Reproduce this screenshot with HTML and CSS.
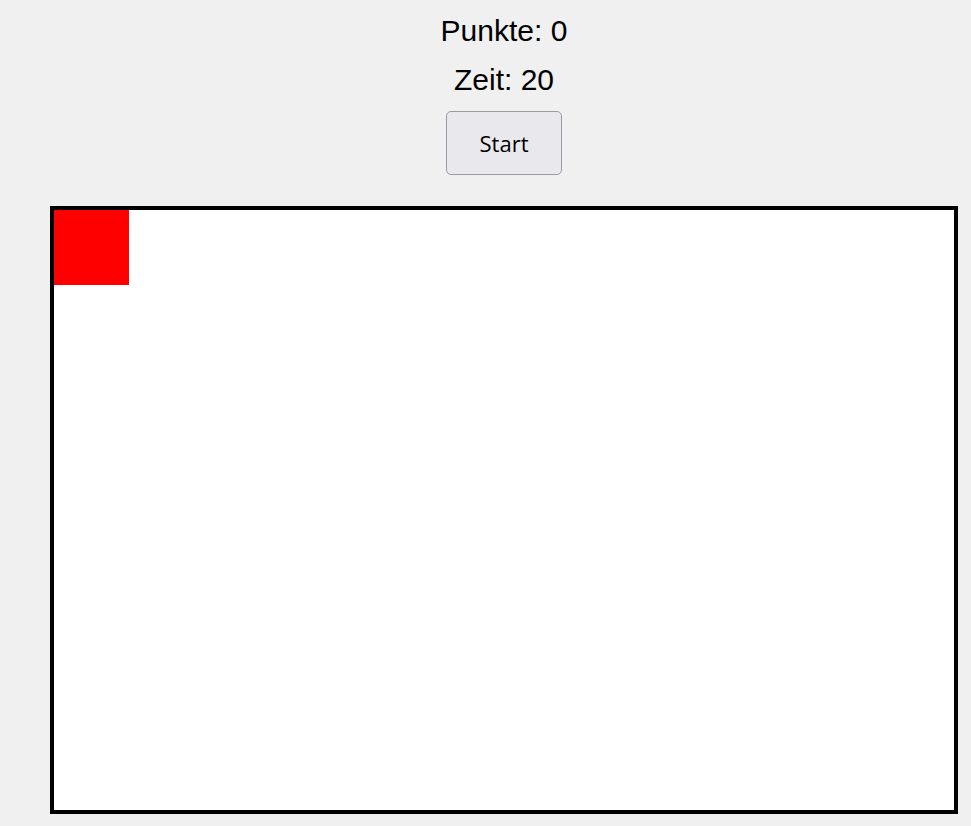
FILE: index.html
```html
<!DOCTYPE html>
<html lang="de">
<head>
<meta charset="utf-8">
<title>Spiel</title>
<link rel="stylesheet" href="styles.css">
</head>
<body>
<div class="header">
  <div class="stat">Punkte: 0</div>
  <div class="stat">Zeit: 20</div>
  <button class="start">Start</button>
</div>
<div class="board">
  <div class="target"></div>
</div>
</body>
</html>
```
FILE: styles.css
```css
html, body {
  margin: 0;
  padding: 0;
  background: #f0f0f0;
  overflow: hidden;
}
body {
  font-family: "Liberation Sans", Arial, sans-serif;
  color: #000;
}
.header {
  padding: 6px 0 0 37px;
  display: flex;
  flex-direction: column;
  align-items: center;
}
.stat {
  font-size: 30px;
  line-height: 49px;
  height: 49px;
}
.start {
  margin-top: 7px;
  width: 116px;
  height: 64px;
  box-sizing: border-box;
  background: #e9e9ed;
  border: 1px solid #9a9aa2;
  border-radius: 5px;
  font-family: "Open Sans", sans-serif;
  font-size: 22px;
  color: #000;
  padding: 0;
}
.board {
  margin: 31px 0 0 50px;
  width: 900px;
  height: 600px;
  border: 4px solid #000;
  background: #fff;
  position: relative;
}
.target {
  position: absolute;
  left: 0;
  top: 0;
  width: 75px;
  height: 75px;
  background: #ff0000;
}
```
